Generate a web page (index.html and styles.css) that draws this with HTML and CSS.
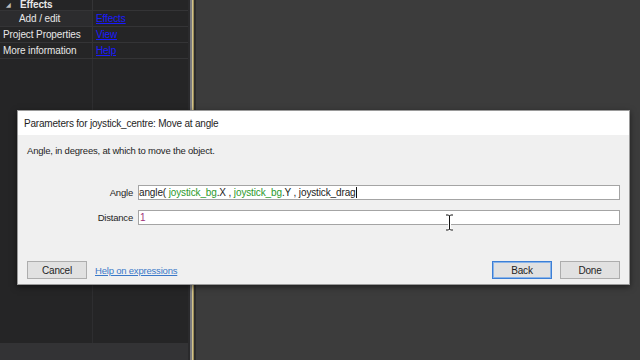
FILE: index.html
```html
<!DOCTYPE html>
<html lang="en">
<head>
  <meta charset="UTF-8">
  <title>Move at angle</title>
  <link rel="stylesheet" href="styles.css">
</head>
<body>

  <div class="app">
    <div class="props">
      <div class="row group">
        <span class="cell key"><span class="arrow">&#9698;</span>Effects</span>
        <span class="cell"></span>
      </div>
      <div class="row">
        <span class="cell key sub">Add / edit</span>
        <span class="cell"><a href="#">Effects</a></span>
      </div>
      <div class="row">
        <span class="cell key">Project Properties</span>
        <span class="cell"><a href="#">View</a></span>
      </div>
      <div class="row">
        <span class="cell key">More information</span>
        <span class="cell"><a href="#">Help</a></span>
      </div>
      <div class="rest">
        <span class="cell key"></span>
        <span class="cell"></span>
      </div>
      <div class="statusbar"></div>
    </div>
    <div class="splitter"></div>
    <div class="canvas"></div>
  </div>

  <div class="dialog">
    <div class="dialog-title">Parameters for joystick_centre: Move at angle</div>
    <div class="dialog-body">
      <p class="desc">Angle, in degrees, at which to move the object.</p>
      <div class="fields">
        <label class="field-label">Angle</label>
        <div class="field-input">angle( <span class="obj">joystick_bg</span>.X , <span class="obj">joystick_bg</span>.Y , joystick_drag<span class="caret"></span></div>
        <label class="field-label">Distance</label>
        <div class="field-input"><span class="num">1</span></div>
      </div>
      <div class="actions">
        <button class="btn">Cancel</button>
        <a class="help" href="#">Help on expressions</a>
        <span class="grow"></span>
        <button class="btn focused">Back</button>
        <button class="btn">Done</button>
      </div>
    </div>
  </div>

  <svg class="ibeam" width="9" height="17" viewBox="0 0 9 17">
    <path d="M1 1h2.5l1 1 1-1H8M4.5 2v13M1 16h2.5l1-1 1 1H8" fill="none" stroke="#fff" stroke-width="3"/>
    <path d="M1 1h2.5l1 1 1-1H8M4.5 2v13M1 16h2.5l1-1 1 1H8" fill="none" stroke="#111" stroke-width="1"/>
  </svg>

</body>
</html>
```

FILE: styles.css
```css
body {
  margin: 0;
  width: 640px;
  height: 360px;
  overflow: hidden;
  font-family: 'Liberation Sans', Arial, sans-serif;
  font-size: 10px;
  background: #3c3c3c;
}

.app {
  display: flex;
  height: 360px;
}

/* properties panel */
.props {
  width: 188px;
  background: #252526;
  display: flex;
  flex-direction: column;
  color: #e8e8e8;
  font-size: 10px;
  letter-spacing: -0.1px;
}

.row {
  display: flex;
  height: 16px;
  border-bottom: 1px solid #343436;
  box-sizing: border-box;
}

.row.group {
  height: 13px;
  margin-top: -2px;
  font-weight: bold;
}

.cell {
  display: flex;
  align-items: center;
  white-space: nowrap;
  overflow: hidden;
}

.key {
  width: 93px;
  padding-left: 3px;
  box-sizing: border-box;
  border-right: 1px solid #343436;
}

.sub {
  padding-left: 19px;
  background: #2c2c2e;
}

.arrow {
  font-size: 6px;
  color: #bbb;
  margin: 0 9px 0 6px;
}

.group .key {
  padding-left: 0;
}

.row a {
  color: #1a1aff;
  padding-left: 3px;
}

.rest {
  flex: 1;
  display: flex;
}

.rest .key {
  border-right: 1px solid #2e2e30;
}

.statusbar {
  height: 17px;
  background: #333335;
}

.splitter {
  width: 8px;
  background: linear-gradient(to right, #2a2a2c 0 2px, #7a7a7e 2px 4px, #d2c48a 4px 5px, #9a8a5a 5px 6px, #2b2b2b 6px 8px);
}

.canvas {
  flex: 1;
  background: #3c3c3c;
}

/* dialog */
.dialog {
  position: absolute;
  left: 17px;
  top: 110px;
  width: 613px;
  height: 175px;
  box-sizing: border-box;
  border: 1px solid #9a9a9a;
  background: #f0f0f0;
  box-shadow: 0 2px 6px rgba(0, 0, 0, 0.5);
  display: flex;
  flex-direction: column;
  color: #1e1e1e;
  letter-spacing: -0.2px;
}

.dialog-title {
  height: 24px;
  background: #fff;
  padding-left: 6px;
  display: flex;
  align-items: center;
  font-size: 10px;
}

.dialog-body {
  flex: 1;
  display: flex;
  flex-direction: column;
  padding: 0 9px 5px 9px;
}

.desc {
  margin: 10px 0 0 0;
  font-size: 9.5px;
}

.fields {
  display: grid;
  grid-template-columns: 106px 1fr;
  column-gap: 5px;
  row-gap: 10px;
  margin-top: 29px;
  align-items: center;
}

.field-label {
  text-align: right;
  font-size: 9.5px;
}

.field-input {
  height: 15px;
  box-sizing: border-box;
  border: 1px solid #a4a4a4;
  background: #fff;
  display: flex;
  align-items: center;
  white-space: pre;
  color: #222;
  letter-spacing: -0.13px;
}

.obj {
  color: #2c9a2c;
}

.num {
  color: #a0307a;
  padding-left: 1px;
}

.caret {
  width: 1px;
  height: 11px;
  background: #111;
}

.actions {
  display: flex;
  align-items: center;
  margin-top: auto;
  gap: 8px;
}

.grow {
  flex: 1;
}

.btn {
  width: 60px;
  height: 18px;
  padding: 0;
  border: 1px solid #adadad;
  background: #e1e1e1;
  font-family: inherit;
  font-size: 10px;
  letter-spacing: -0.2px;
  color: #1e1e1e;
}

.btn.focused {
  border: 1px solid #3c7fd6;
  box-shadow: inset 0 0 0 1px #8ab4e8;
}

.help {
  color: #3a78c8;
  font-size: 9.5px;
}

.ibeam {
  position: absolute;
  left: 445px;
  top: 214px;
}
```
